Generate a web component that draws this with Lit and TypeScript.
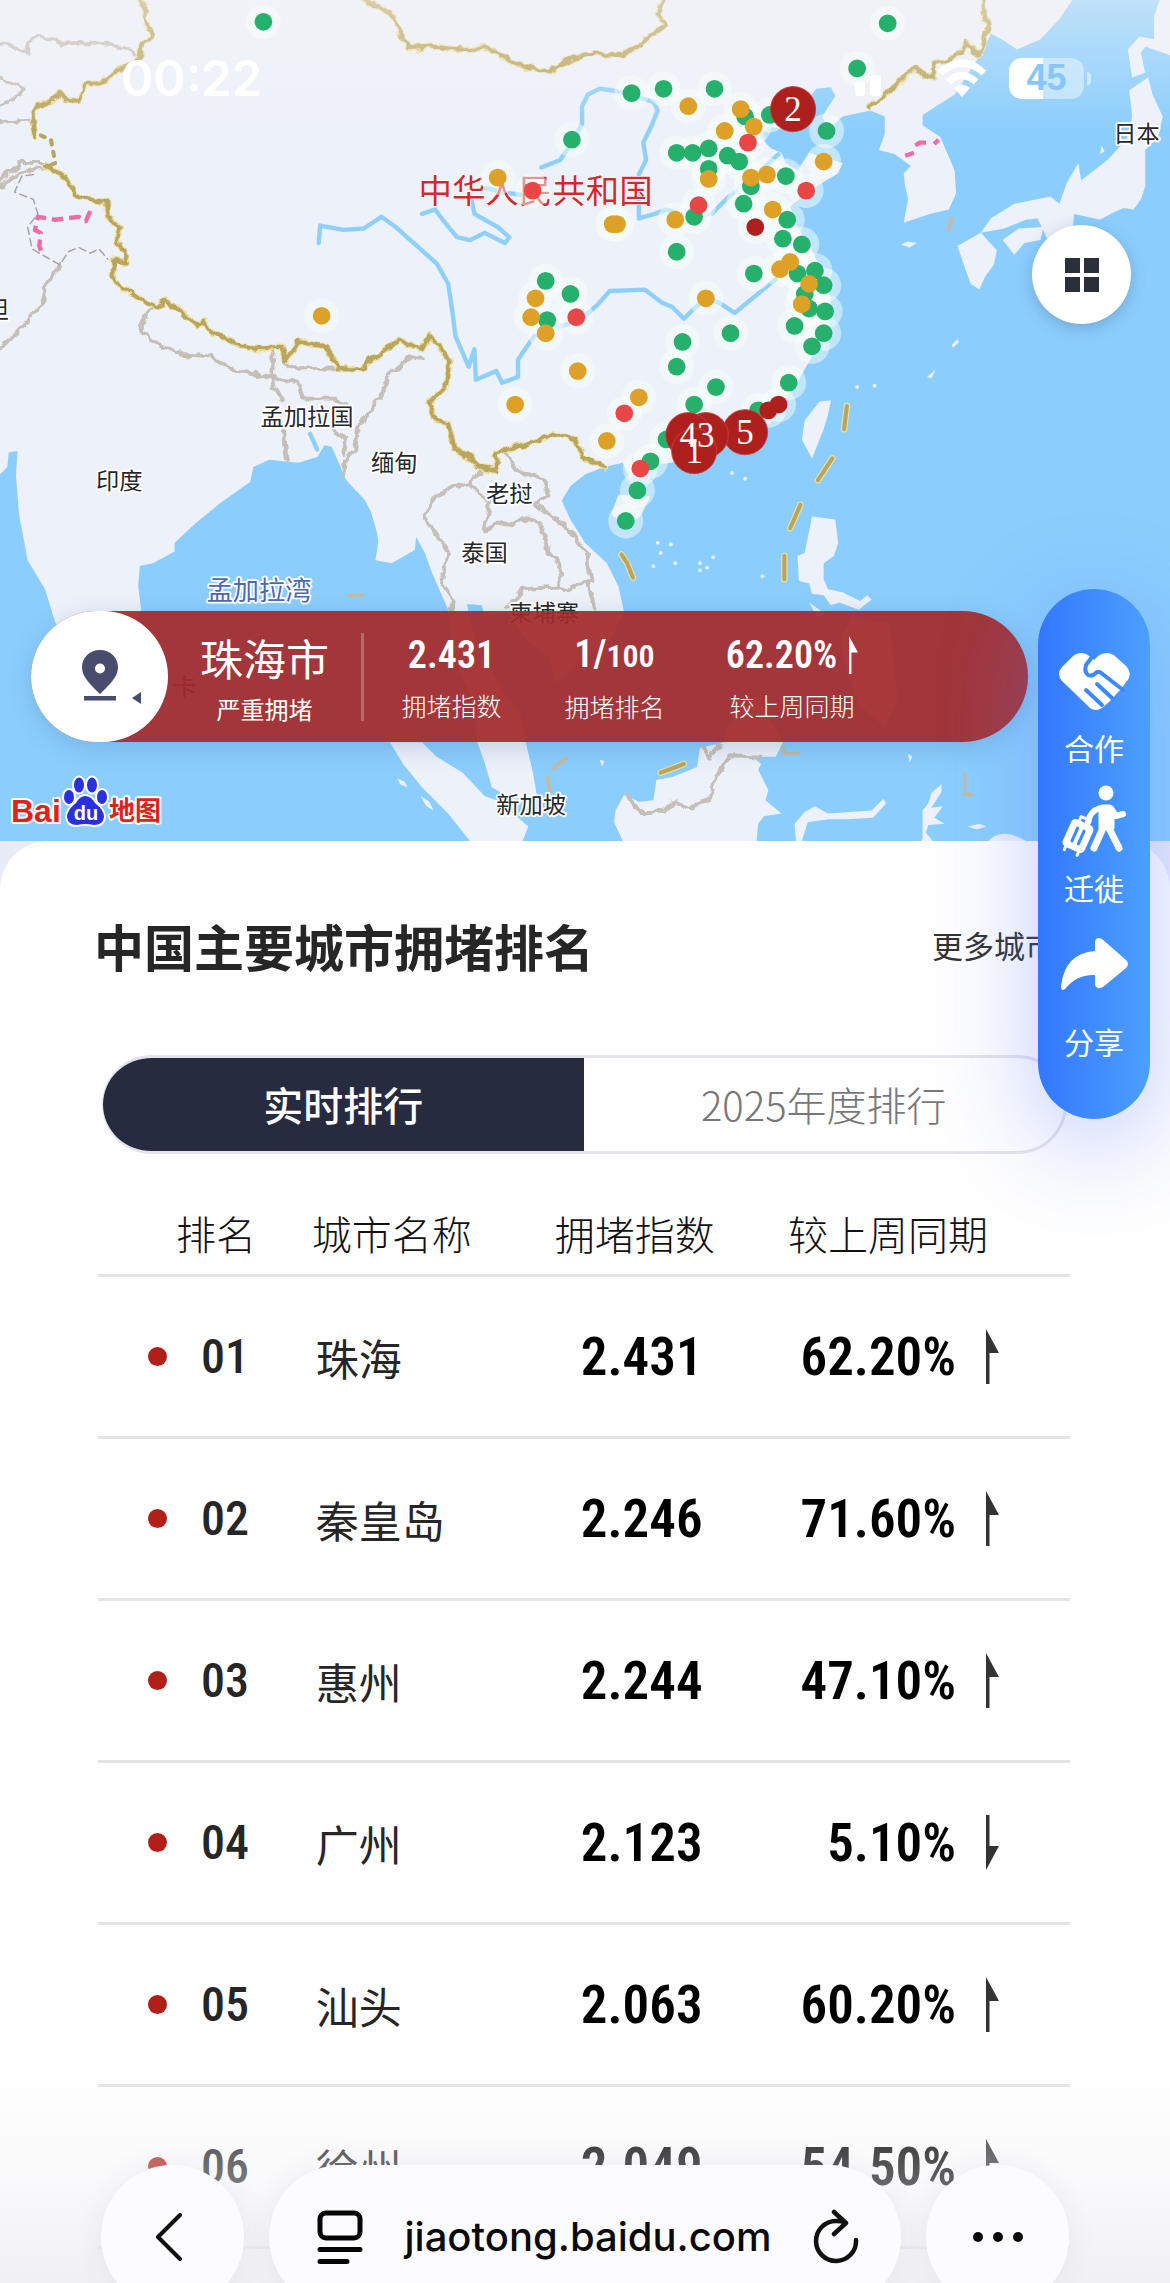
import { LitElement, html, svg, css } from "lit";
import { customElement, property, state } from "lit/decorators.js";

type Point = [number, number];
type Level = "smooth" | "slow" | "jam" | "severe";

const LAND = [
  // Mainland Asia with Korea, Indochina and India
  "M0 0H737L728 13 715 27 699 34 690 28 681 23 674 37 656 65 634 79 634 86 646 94 656 117 657 133 652 144 639 147 621 153 624 137 622 128 621 119 626 114 615 106 604 103 608 92 608 80 598 76 579 80 569 89 565 80 574 66 571 60 561 61 552 72 540 89 528 87 522 94 530 102 537 105 540 112 548 117 556 105 579 112 576 119 556 131 543 142 548 156 558 172 566 190 571 206 569 229 558 245 546 266 538 275 525 286 500 304 480 314 461 318 438 321 433 330 428 318 415 321 402 326 392 334 386 344 392 357 402 373 417 387 425 403 429 421 418 442 398 455 382 470 378 452 362 440 349 421 333 423 331 416 321 415 323 428 332 452 345 474 358 492 361 509 366 530 369 547 352 549 338 541 333 524 328 510 325 480 311 452 308 419 297 394 292 380 286 369 285 378 269 387 258 385 260 372 259 366 255 352 251 344 238 330 228 307 223 306 218 314 205 318 185 316 174 321 172 331 151 346 134 360 120 373 120 379 105 387 96 389 95 403 97 419 84 442 60 452 38 428 31 405 19 385 13 353 11 327 12 310 6 311 5 321 0 326Z",
  // Sumatra
  "M268 510L277 525 290 541 308 559 323 578H359L363 568 354 560 341 550 333 547 318 531 300 520 290 510Z",
  // Borneo
  "M497 510L481 514 479 527 462 534 451 536 449 550 439 551 429 546 423 557 422 565 428 578H520L521 566 525 561 537 559 526 550 528 543 521 529 523 525 517 520 533 520 538 510 520 478 500 500Z",
  // Sulawesi and the Moluccas
  "M547 578L546 566 553 558 560 554 569 559 599 557 607 549 609 552 600 562 582 563 569 563 555 565 551 578ZM633 578L636 572 641 578ZM647 539L647 544 640 555 648 554 642 562 649 566 638 567 634 578 634 557 638 552 640 545ZM665 568l8-2 5 2-7 2ZM679 578q10-10 26 0Z",
  // Philippines
  "M558 355L574 357 576 373 573 382 566 387 566 398 569 405 579 407 591 413 596 409 599 412 590 419 577 414 571 416 566 409 558 408 556 401 549 399 548 382 553 380ZM556 414L566 421 562 425ZM585 425L611 428 617 480 608 500 590 484 580 455 578 438Z",
  // Taiwan and Hainan
  "M563 276L571 275 569 285 566 295 558 315 551 302 553 289ZM425 340L447 341 440 355 430 362 420 353Z",
  // Hokkaido, Honshu, Shikoku, Kyushu
  "M797 0H804V38L787 32 784 36 787 50 778 53 775 34 783 25 793 27 793 11ZM789 53L792 65 799 80 796 94 787 103 787 128 784 137 779 144 772 143 763 147 756 151 738 147 737 160 720 165 713 150 705 151 690 157 674 160 681 150 697 140 722 135 728 140 733 126 741 112 743 124 761 110 774 96 778 80 776 62ZM689 165L700 157 717 156 715 165 704 167 697 175ZM658 169L674 160 685 172 683 182 677 190 673 199 667 195 662 181ZM619 168l5-2 6 1-5 3ZM654 237l4-4 1 2-4 4ZM637 259l6-5-3 6Z",
  // Islets
  "M273 535l5 2 2 4-5-2ZM289 547l6 4 3 6-5-3ZM412 522l3 1-1 4ZM624 518l3 2-2 4ZM757 100l2 4-3 2Z",
];

const SPECKS: Point[] = [
  [589, 266], [601, 265], [503, 325], [512, 329], [452, 373], [461, 374], [454, 380],
  [449, 389], [464, 387], [481, 387], [490, 383], [486, 390], [481, 392], [524, 396],
];

const NATIONAL_BORDERS = [
  "M96 0L100 5 99 11 104 24 97 32 96 40 79 50 70 57 59 58 54 69 45 69 42 64 34 70 26 73 22 82 24 94",
  "M31 114L40 118 47 125 51 133 60 137 73 139 74 149 83 156 81 165 86 175 87 181 77 179 79 195 87 199 97 206 108 211 113 206 124 213 136 224 139 221 146 228 154 232 164 238 179 240 194 239 196 249 205 235 224 238 233 253 249 253 262 242 274 234 290 240 295 231 303 240 309 247 306 266 295 277 299 289 308 291 313 309 320 312 328 320 341 323 340 311 349 309 359 306 372 302 382 298 395 302 400 314 415 320",
  "M251 0L269 9 275 22 281 33 297 32 315 34 336 33 346 40 364 47 378 49 390 42 402 38 428 37 440 31 457 17 452 9 456 0",
  "M675 0L679 21 672 38 668 32 663 29 661 36 654 39 650 43 641 43 642 54 628 47 617 58 598 73",
];

const SEA_DASHES = [
  "M582 279L580 295", "M572 315L562 330", "M550 347L543 363", "M539 382V398",
  "M427 381L431 387 435 397", "M454 531L470 525",
];

const OTHER_BORDERS = [
  "M0 31L12 33 19 37 21 27 28 24 44 30 60 29 85 32 96 39", "M0 52L8 58 17 62 0 73", "M0 84L21 82",
  "M0 124L15 112 31 112", "M0 128L12 119 31 115", "M42 182L32 195 30 206 19 220 0 240",
  "M103 212L96 227 108 236 123 243 144 245 159 254 187 259 188 240", "M195 250L205 254 233 253",
  "M187 259L188 266 195 275", "M187 259L205 263 208 274 231 274 238 278",
  "M290 247L282 245 267 257 262 273 252 284 246 295 244 309 237 316 235 328", "M195 295L197 316",
  "M230 295L238 302 236 312",
  "M331 323L323 332 312 334 299 341 292 356 300 367 308 380 303 399 312 412 310 421",
  "M323 332L336 346 333 366 342 359 352 361 359 356 368 358 374 366 377 380 386 389 383 403 359 405 349 417",
  "M383 403L392 405 402 400 407 399 404 388 404 380 387 360 367 346 377 340 373 330 356 323 346 309",
  "M404 400L408 417", "M431 547L440 558 456 558 463 551 476 555 488 549 492 534 502 519 522 520",
  "M484 514L488 522 494 512",
];

const RIVERS = [
  "M219 167L220 155 236 158 250 157 262 149 272 156 282 165 300 181 308 195 311 215 313 231 322 252 326 240 327 261 341 255 345 263 356 259 356 247 367 231 380 226 392 222 402 217 410 210 419 200 443 199 455 208 462 211 470 219 478 211 487 205 494 208 505 215 517 205 533 192",
  "M290 147L299 144 305 152 314 163 323 165 333 160 347 167 350 163 342 156 326 147 324 137",
  "M333 129L345 132 359 134", "M372 115L385 110 393 98 400 85 400 73 404 65 412 61 420 62 433 65 449 70 452 76 447 88 442 98 444 110 439 120",
  "M439 130L439 150 450 147 458 144 474 149 489 147 500 136 515 124 535 106", "M213 298L218 309",
];

const LABELS: { text: string; x: number; y: number; tone?: string }[] = [
  { text: "坦", x: -2, y: 213 }, { text: "印度", x: 82, y: 330 }, { text: "孟加拉国", x: 211, y: 286 },
  { text: "缅甸", x: 271, y: 318 }, { text: "老挝", x: 350, y: 339 }, { text: "泰国", x: 333, y: 380 },
  { text: "柬埔寨", x: 374, y: 421 }, { text: "新加坡", x: 365, y: 553 }, { text: "日本", x: 781, y: 92 },
  { text: "卡", x: 127, y: 472, tone: "bare" },
  { text: "孟加拉湾", x: 178, y: 406, tone: "sea" }, { text: "中华人民共和国", x: 368, y: 131, tone: "home" },
];

const CITIES: Record<Level, Point[]> = {
  smooth: [
    [181, 15], [610, 16], [589, 47], [434, 64], [456, 61], [491, 61], [529, 79], [568, 90], [512, 80], [393, 96],
    [465, 105], [476, 105], [487, 102], [500, 107], [508, 111], [487, 116], [540, 121], [516, 128], [511, 140],
    [477, 149], [541, 151], [538, 164], [551, 168], [465, 173], [518, 188], [560, 186], [548, 188], [566, 196],
    [553, 202], [556, 212], [567, 214], [546, 224], [566, 229], [558, 238], [502, 229], [469, 235], [465, 252],
    [492, 266], [542, 263], [477, 278], [521, 282], [375, 193], [392, 202], [376, 220], [458, 302], [447, 317],
    [438, 337], [430, 358],
  ],
  slow: [
    [473, 73], [509, 75], [518, 87], [498, 90], [566, 111], [487, 123], [516, 122], [527, 120], [531, 144],
    [464, 151], [421, 154], [424, 154], [536, 185], [543, 180], [556, 195], [551, 209], [485, 205], [439, 273],
    [342, 122], [368, 205], [365, 218], [375, 229], [221, 217], [354, 278], [397, 255], [417, 303],
  ],
  jam: [[514, 98], [554, 131], [480, 141], [429, 284], [366, 131], [396, 218], [440, 322]],
  severe: [[519, 156], [528, 282], [535, 278]],
};

const TOP_CITIES: { rank: number; x: number; y: number }[] = [
  { rank: 5, x: 512, y: 297 }, { rank: 3, x: 485, y: 299 }, { rank: 4, x: 473, y: 299 },
  { rank: 1, x: 477, y: 310 }, { rank: 2, x: 545, y: 75 },
];

@customElement("traffic-map")
export class TrafficMap extends LitElement {
  static styles = css`
    :host { display: block; }
    .map { display: block; width: 100%; height: auto; background: #8bcefd; }
    .land { fill: #edf1f9; }
    .line { fill: none; stroke-linejoin: round; stroke-linecap: round; }
    .river { stroke: #8fd0fb; stroke-width: 3; }
    .other { stroke: #c6bfb7; stroke-width: 2.6; }
    .glow { stroke: #ecdf9f; stroke-width: 4.4; }
    .nation { stroke: #b9a55f; stroke-width: 2.8; }
    .broken { stroke-dasharray: 3 5; }
    .disputed { stroke: #a3a3a3; stroke-width: 1; stroke-dasharray: 5 3; }
    .ceasefire { stroke: #ee6ba6; stroke-width: 3; stroke-dasharray: 8 4; stroke-linecap: butt; }
    .sliver { stroke: #c9b99f; stroke-width: 2.4; }
    .label {
      font-family: "Noto Sans CJK SC", sans-serif; font-size: 16px; fill: #26272b; text-anchor: middle;
      stroke: #fff; stroke-width: 2.5; paint-order: stroke; stroke-linejoin: round;
    }
    .bare { stroke: none; }
    .sea { font-size: 18px; fill: #4c68b4; }
    .home { font-size: 23px; fill: #cf2a2d; stroke-width: 1; }
    .halo { fill: #f8fdfb; opacity: 0.5; }
    .smooth { fill: #25b06c; }
    .slow { fill: #dca126; }
    .jam { fill: #e94746; }
    .severe { fill: #ae201d; }
    .rank { fill: #fff; font-family: "Liberation Serif", serif; font-size: 24px; text-anchor: middle; }
    .top { fill: #ae201d; stroke: #c14440; stroke-width: 0.6; }
  `;

  render() {
    return html`<svg class="map" viewBox="0 0 804 578" role="img" aria-label="全国城市拥堵地图">
      <defs>
        <linearGradient id="haze" x1="0" y1="0" x2="0" y2="1">
          <stop offset="0" stop-color="#f6f4f6" stop-opacity="0.5" />
          <stop offset="1" stop-color="#f6f4f6" stop-opacity="0" />
        </linearGradient>
        <filter id="rugged" filterUnits="userSpaceOnUse" x="-10" y="-10" width="824" height="598">
          <feTurbulence type="fractalNoise" baseFrequency="0.14" numOctaves="2" seed="4" />
          <feDisplacementMap in="SourceGraphic" scale="6" xChannelSelector="R" yChannelSelector="G" />
        </filter>
      </defs>
      ${LAND.map((d) => svg`<path class="land" d=${d} />`)}
      ${SPECKS.map(([x, y]) => svg`<circle class="land" cx=${x} cy=${y} r="1.3" />`)}
      ${RIVERS.map((d) => svg`<path class="line river" d=${d} />`)}
      <g filter="url(#rugged)">
        ${OTHER_BORDERS.map((d) => svg`<path class="line other" d=${d} />`)}
        ${NATIONAL_BORDERS.map(
          (d) => svg`<path class="line glow" d=${d} /><path class="line nation" d=${d} />`,
        )}
      </g>
      ${SEA_DASHES.map((d) => svg`<path class="line glow" d=${d} /><path class="line nation" d=${d} />`)}
      <path class="line nation broken" d="M28 93L35 96 38 112 31 115" />
      <path class="line disputed" d="M23 120L15 121 10 132 23 137 26 147 19 156 22 171 41 182 47 173 54 170 62 174 68 171 74 178" />
      <path class="line ceasefire" d="M62 145L59 152 54 149 38 151 26 149 24 158 28 160 27 169 29 175" />
      <path class="line ceasefire" d="M622 107L628 105M629 100L632 98 638 98M642 99L645 96" />
      <path class="line sliver" d="M654 150L652 158M240 409H249M380 528L389 521M376 534L378 544M538 513L539 518H549M663 532V546H668" />
      ${LABELS.map(
        (l) => svg`<text class="label ${l.tone ?? ""}" x=${l.x} y=${l.y} dy="0.36em">${l.text}</text>`,
      )}
      <rect width="804" height="90" fill="url(#haze)" />
      ${Object.values(CITIES).flat().map(([x, y]) => svg`<circle class="halo" cx=${x} cy=${y} r="12" />`)}
      ${(Object.keys(CITIES) as Level[]).map((level) =>
        CITIES[level].map(([x, y]) => svg`<circle class=${level} cx=${x} cy=${y} r="6.1" />`),
      )}
      ${TOP_CITIES.map((c) => svg`<circle class="top" cx=${c.x} cy=${c.y} r="15.5" />`)}
      ${TOP_CITIES.map((c) => svg`<text class="rank" x=${c.x} y=${c.y} dy="0.33em">${c.rank}</text>`)}
    </svg>`;
  }
}

@customElement("trend-arrow")
export class TrendArrow extends LitElement {
  @property({ type: Boolean }) down = false;
  static styles = css`
    :host { display: inline-block; }
    svg { display: block; height: 100%; width: auto; fill: currentColor; }
  `;
  render() {
    const d = this.down ? "M0 0H3.500V31H13L0 55Z" : "M0 55H3.500V24H13L0 0Z";
    return html`<svg viewBox="0 0 13 55" role="img" aria-label=${this.down ? "下降" : "上升"}><path d=${d} /></svg>`;
  }
}

interface Row { rank: string; city: string; index: string; change: string; down?: boolean; }

const ROWS: Row[] = [
  { rank: "01", city: "珠海", index: "2.431", change: "62.20%" },
  { rank: "02", city: "秦皇岛", index: "2.246", change: "71.60%" },
  { rank: "03", city: "惠州", index: "2.244", change: "47.10%" },
  { rank: "04", city: "广州", index: "2.123", change: "5.10%", down: true },
  { rank: "05", city: "汕头", index: "2.063", change: "60.20%" },
  { rank: "06", city: "徐州", index: "2.049", change: "54.50%" },
];

@customElement("app-root")
export class AppRoot extends LitElement {
  @state() private tab = 0;

  static styles = css`
    :host {
      display: block; font-family: "Noto Sans CJK SC", sans-serif; color: #262626;
      --digits: "Roboto Condensed", "Liberation Sans Narrow", Roboto, sans-serif;
    }
    button { border: 0; padding: 0; margin: 0; background: none; color: inherit; font: inherit; cursor: pointer; }
    svg { display: block; }
    .screen { position: relative; height: 100vh; overflow: hidden; background: #fefefe; }
    .stage { position: relative; }

    .status {
      position: absolute; inset: 0 0 auto 0; display: flex; align-items: center; height: 156px;
      padding: 0 79px 0 121px; color: #fff; box-sizing: border-box;
    }
    .time { flex: 1; font: 600 49px/1 Inter, "Liberation Sans", sans-serif; }
    .signal { margin-right: 55px; }
    .wifi { margin-right: 22px; }
    .battery {
      display: flex; align-items: center; justify-content: center; width: 75px; height: 41px; border-radius: 13px;
      background: linear-gradient(90deg, #fff 45%, rgba(255, 255, 255, 0.42) 45%);
      font: 700 36px/1 "Liberation Sans", sans-serif; color: #86c6f8;
    }
    .nub { width: 4px; height: 13px; margin-left: 3px; border-radius: 0 4px 4px 0; background: rgba(255, 255, 255, 0.5); }

    .layers {
      position: absolute; top: 225px; right: 39px; width: 99px; height: 99px; border-radius: 50%;
      background: #fff; box-shadow: 0 4px 16px rgba(60, 80, 120, 0.3); display: grid; place-items: center;
    }

    .banner {
      position: absolute; left: 31px; right: 142px; top: 611px; height: 131px; display: flex; align-items: center;
      border-radius: 66px; background: rgba(164, 42, 43, 0.93); color: #fff; box-shadow: 0 6px 24px rgba(50, 90, 140, 0.22);
    }
    .locate {
      flex: none; width: 137px; height: 131px; border-radius: 66px; background: #fff; box-sizing: border-box;
      padding-left: 50px; display: flex; align-items: center;
    }
    .place, .stat { display: flex; flex-direction: column; align-items: center; }
    .place { width: 193px; gap: 8px; }
    .city { font-size: 43px; line-height: 56px; }
    .level { font-size: 24px; line-height: 32px; }
    .rule { width: 3px; height: 88px; margin-right: 6px; background: rgba(255, 255, 255, 0.25); }
    .stat { width: 163px; gap: 16px; font-weight: 300; }
    .wide { width: 192px; }
    .figure {
      display: flex; align-items: baseline; line-height: 40px; font-weight: 600; font-size: 38px;
      font-family: var(--digits);
    }
    .small { font-size: 32px; }
    .figure trend-arrow { height: 38px; margin-left: 12px; align-self: center; }
    .caption { font-size: 25px; line-height: 28px; }

    .logo { position: absolute; left: 8px; bottom: 10px; width: 156px; height: 56px; }

    .rail {
      position: absolute; top: 589px; right: 20px; width: 112px; height: 530px; border-radius: 56px;
      box-sizing: border-box; padding-top: 64px; display: flex; flex-direction: column; align-items: center;
      background: linear-gradient(90deg, #3277ff, #4ca0fe); color: #fff;
      box-shadow: 0 20px 90px 10px rgba(90, 120, 255, 0.32);
    }
    .action { display: flex; flex-direction: column; align-items: center; font-size: 30px; line-height: 44px; }
    .action svg { height: 72px; }
    .roomy { margin-top: 16px; }
    .roomy svg { height: 80px; }
    .last { margin-top: 28px; }
    .last svg { height: 82px; }

    .sheet { background: #e9ecf8; }
    .panel { background: #fefefe; border-radius: 48px 48px 0 0; padding: 72px 100px 0 94px; }
    .head { display: flex; align-items: center; justify-content: space-between; }
    h1 { margin: 0; font-size: 50px; line-height: 64px; font-weight: 700; }
    .more { margin-right: 14px; color: #333; font-size: 31px; line-height: 40px; text-decoration: none; }
    .ranking { padding-left: 4px; }
    .tabs {
      display: flex; height: 99px; box-sizing: border-box; margin: 78px 3px 0 4px; overflow: hidden;
      border: 3px solid #e3e4ea; border-left-width: 1px; border-radius: 50px;
    }
    .tab { flex: 1; font-size: 40px; line-height: 56px; padding-bottom: 2px; font-weight: 300; color: #777; }
    .tab.on { background: #272b40; color: #fff; font-weight: 500; }

    table { width: 100%; margin-top: 37px; border-collapse: separate; border-spacing: 0; table-layout: fixed; }
    .c1 { width: 22%; } .c2 { width: 25%; } .c3 { width: 24%; }
    th, td { padding: 0; text-align: left; border-bottom: 3px solid #e4e4e4; box-sizing: border-box; white-space: nowrap; }
    th { height: 86px; font-size: 40px; line-height: 56px; font-weight: 300; color: #111; }
    td { height: 162px; }
    th:first-child { padding-left: 78px; }
    .rank { display: flex; align-items: center; gap: 34px; padding-left: 50px; font: 500 48px/56px var(--digits); }
    .dot { width: 19px; height: 19px; border-radius: 50%; background: #b21f18; }
    .name { padding-left: 4px; font-size: 43px; line-height: 56px; font-weight: 400; }
    .num, .change { color: #000; font: 600 53px/56px var(--digits); }
    .num { padding-left: 26px; }
    .change { display: flex; align-items: center; justify-content: flex-end; gap: 30px; padding-right: 71px; }
    .change trend-arrow { height: 55px; color: #333; }

    .dock {
      position: absolute; inset: auto 0 0 0; height: 208px; overflow: hidden; box-sizing: border-box; padding: 90px 101px 0;
      display: flex; align-items: flex-start; gap: 25px;
      background: linear-gradient(rgba(250, 250, 252, 0), rgba(244, 244, 248, 0.4) 50%, rgba(238, 238, 243, 0.85));
    }
    .round, .address { flex: none; height: 144px; border-radius: 72px; background: #fcfcfe; box-shadow: 0 0 30px rgba(60, 60, 90, 0.07); }
    .round { width: 143px; display: grid; place-items: center; }
    .back { padding-right: 8px; }
    .address { flex: 1; display: flex; align-items: center; padding: 0 42px 0 48px; }
    .url { flex: 1; text-align: center; color: #0a0a0a; font: 500 40px/48px Inter, Roboto, sans-serif; }
  `;

  private banner() {
    return html`<section class="banner" aria-label="珠海市拥堵概况">
      <button class="locate" aria-label="选择城市">
        <svg width="60" height="54" viewBox="0 0 60 54" fill="#484d6e">
          <path fill-rule="evenodd" d="M19 0C8 0 1 8 1 17.500C1 27 10 35 19 44C28 35 37 27 37 17.500C37 8 30 0 19 0ZM19 13.500a5 5 0 1 1 0 10a5 5 0 0 1 0-10Z" />
          <path d="M3 46H35V50.500H3ZM60 42V54L51 48Z" />
        </svg>
      </button>
      <div class="place"><span class="city">珠海市</span><span class="level">严重拥堵</span></div>
      <div class="rule"></div>
      <div class="stat"><span class="figure">2.431</span><span class="caption">拥堵指数</span></div>
      <div class="stat"><span class="figure">1/<span class="small">100</span></span><span class="caption">拥堵排名</span></div>
      <div class="stat wide">
        <span class="figure">62.20%<trend-arrow></trend-arrow></span><span class="caption">较上周同期</span>
      </div>
    </section>`;
  }

  private rail() {
    return html`<nav class="rail" aria-label="快捷操作">
      <button class="action">
        <svg width="71" viewBox="0 0 71 72" fill="none" stroke="#3d88fe" stroke-width="4" stroke-linecap="round" stroke-linejoin="round">
          <path fill="#fff" stroke="none" d="M22 0Q17 0 13 4L3 14Q-3 21 3 28L29 53Q35 60 43 55L50 49 62 36 68 28Q74 21 67 13L57 4Q53 0 48 0Q43 0 39 3L35 7 30 3Q27 0 22 0Z" />
          <path d="M33 4L27 12Q25 19 29 22Q33 24 38 19L41 19 64 37M38 31L54 46M27 37L43 52" />
        </svg>
        合作
      </button>
      <button class="action roomy">
        <svg width="66" viewBox="0 0 66 80" fill="none" stroke="#fff" stroke-linecap="round" stroke-linejoin="round">
          <circle cx="45" cy="8" r="7.500" fill="#fff" stroke="none" />
          <path fill="#fff" stroke-width="3" d="M41 21H48Q52 21 52 26V43H39V24Z" />
          <path stroke-width="6" d="M39 23Q29 26 27 37M51 25L55 31 62 29" />
          <path stroke-width="7" d="M42 43L33 63M48 43L58 63" />
          <g transform="translate(17 51) rotate(24)">
            <rect x="-12" y="-15" width="24" height="30" rx="5" fill="#fff" stroke="none" />
            <path stroke-width="3" d="M-5 -15V-19H5V-15M-7 14V18M7 14V18" />
            <path stroke="#3d88fe" stroke-width="3" d="M-3.500 -7V7M3.500 -7V7" />
          </g>
        </svg>
        迁徙
      </button>
      <button class="action last">
        <svg width="67" viewBox="0 0 67 82" fill="#fff">
          <path d="M34 14V5Q35 -1 41 2L65 23Q69 27 65 31L42 50Q36 53 34 48V38Q16 37 4 52Q0 55 0 49Q4 16 34 14Z" />
        </svg>
        分享
      </button>
    </nav>`;
  }

  private logo() {
    return html`<svg class="logo" viewBox="0 0 156 56" role="img" aria-label="Baidu 地图">
      <g stroke="#fff" stroke-width="4" paint-order="stroke" stroke-linejoin="round" fill="#e0221c">
        <text x="3" y="47" font-family="Liberation Sans, sans-serif" font-weight="700" font-size="32">Bai</text>
        <text x="101" y="45" font-family="Noto Sans CJK SC, sans-serif" font-weight="700" font-size="26">地图</text>
        <g fill="#2a2fe0">
          <ellipse cx="61" cy="22" rx="5" ry="7" />
          <ellipse cx="71" cy="10" rx="5" ry="7.500" />
          <ellipse cx="84" cy="10" rx="5" ry="7.500" />
          <ellipse cx="94" cy="22" rx="5" ry="7" />
          <path d="M77 21Q83 21 87 28Q96 35 96 42Q95 50 86 50Q77 48 69 50Q60 50 59 42Q59 35 68 28Q72 21 77 21Z" />
        </g>
      </g>
      <text x="78" y="45" fill="#fff" text-anchor="middle" font-family="Liberation Sans, sans-serif" font-weight="700" font-size="20">du</text>
    </svg>`;
  }

  private table() {
    return html`<table>
      <colgroup><col class="c1" /><col class="c2" /><col class="c3" /><col /></colgroup>
      <thead><tr><th>排名</th><th>城市名称</th><th>拥堵指数</th><th>较上周同期</th></tr></thead>
      <tbody>
        ${ROWS.map(
          (r) => html`<tr>
            <td><div class="rank"><span class="dot"></span>${r.rank}</div></td>
            <td><div class="name">${r.city}</div></td>
            <td><div class="num">${r.index}</div></td>
            <td><div class="change">${r.change}<trend-arrow ?down=${!!r.down}></trend-arrow></div></td>
          </tr>`,
        )}
      </tbody>
    </table>`;
  }

  render() {
    return html`<div class="screen">
      <div class="stage">
        <traffic-map></traffic-map>
        <div class="status">
          <span class="time">00:22</span>
          <svg class="signal" width="27" height="38" viewBox="0 0 27 38" fill="#fff">
            <rect x="0" y="23" width="10" height="14" rx="3" /><rect x="15" y="16" width="11" height="21" rx="3" />
          </svg>
          <svg class="wifi" width="50" height="38" viewBox="0 0 50 38" fill="none" stroke="#fff" stroke-width="7">
            <path d="M3 14Q25 -6 47 14M11 23Q25 10 39 23" /><path fill="#fff" stroke="none" d="M17 29Q25 22 33 29L25 38Z" />
          </svg>
          <span class="battery">45</span><span class="nub"></span>
        </div>
        <button class="layers" aria-label="图层">
          <svg width="34" height="34" viewBox="0 0 34 34" fill="#2b2f39">
            <path d="M0 0H15V15H0ZM19 0H34V15H19ZM0 19H15V34H0ZM19 19H34V34H19Z" />
          </svg>
        </button>
        ${this.banner()} ${this.logo()}
      </div>
      <main class="sheet">
        <div class="panel">
          <div class="head"><h1>中国主要城市拥堵排名</h1><a class="more" href="#cities">更多城市</a></div>
          <div class="ranking">
            <div class="tabs" role="tablist">
              ${["实时排行", "2025年度排行"].map(
                (t, i) => html`<button class="tab ${this.tab === i ? "on" : ""}" role="tab"
                  aria-selected=${this.tab === i} @click=${() => (this.tab = i)}>${t}</button>`,
              )}
            </div>
            ${this.table()}
          </div>
        </div>
      </main>
      ${this.rail()}
      <footer class="dock">
        <button class="round back" aria-label="返回">
          <svg width="28" height="48" viewBox="0 0 28 48" fill="none" stroke="#111" stroke-width="4" stroke-linecap="round" stroke-linejoin="round"><path d="M25 2L3 24 25 46" /></svg>
        </button>
        <div class="address">
          <svg width="46" height="54" viewBox="0 0 46 54" fill="none" stroke="#050505" stroke-width="5" stroke-linecap="round"><rect x="3" y="3" width="40" height="25" rx="6" /><path d="M3 39.500H43M3 51.500H30" /></svg>
          <span class="url">jiaotong.baidu.com</span>
          <button aria-label="刷新">
            <svg width="46" height="56" viewBox="0 0 46 56" fill="none" stroke="#111" stroke-width="4.500" stroke-linecap="round" stroke-linejoin="round"><path d="M32 13Q28 12 23 12A20 20 0 1 0 43 31M21 3L33 14 21 25" /></svg>
          </button>
        </div>
        <button class="round" aria-label="更多">
          <svg width="52" height="12" viewBox="0 0 52 12" fill="#0a0a0a"><circle cx="6" cy="6" r="5" /><circle cx="26" cy="6" r="5" /><circle cx="46" cy="6" r="5" /></svg>
        </button>
      </footer>
    </div>`;
  }
}
